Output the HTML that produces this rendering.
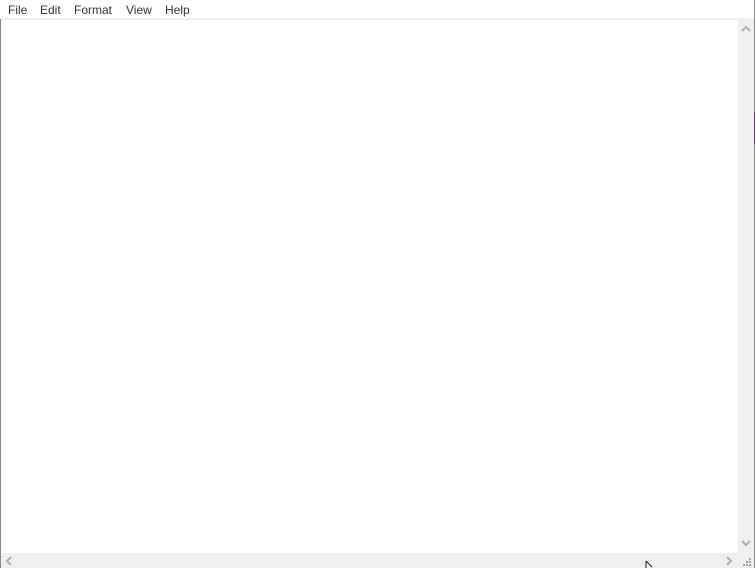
<!DOCTYPE html>
<html><head><style>
*{margin:0;padding:0;box-sizing:border-box}
body{width:755px;height:568px;background:#fff;position:relative;overflow:hidden;font-family:"Segoe UI","Liberation Sans",sans-serif}
#menu{position:absolute;left:0;top:0;width:754px;height:18px;background:#fff;font-size:12px;color:#333}
#menu span{position:absolute;top:3px}
#sep{position:absolute;left:0;top:18px;width:754px;height:2px;background:#f0f0f0}
#lb{position:absolute;left:0;top:19px;width:1px;height:549px;background:#888}
#vs{position:absolute;left:738px;top:20px;width:16px;height:533px;background:#efefef}
#hs{position:absolute;left:1px;top:553px;width:753px;height:15px;background:#efefef}
#rb{position:absolute;left:754px;top:0;width:1px;height:568px;background:#8a8a8a}
#pu{position:absolute;left:754px;top:112px;width:1px;height:32px;background:#7a2a9a}
svg{position:absolute}
</style></head><body>
<div id="menu"><span style="left:8px">File</span><span style="left:40px">Edit</span><span style="left:74px">Format</span><span style="left:126px">View</span><span style="left:165px">Help</span></div>
<div id="sep"></div>
<div id="lb"></div>
<div id="vs"></div>
<div id="hs"></div>
<div id="rb"></div><div id="pu"></div>
<svg style="left:741px;top:25px" width="10" height="8"><path d="M1 6 L5 2 L9 6" stroke="#b0b0b0" stroke-width="2" fill="none"/></svg>
<svg style="left:741px;top:539px" width="10" height="8"><path d="M1 2 L5 6 L9 2" stroke="#b0b0b0" stroke-width="2" fill="none"/></svg>
<svg style="left:5px;top:556px" width="8" height="10"><path d="M6 1 L2 5 L6 9" stroke="#b0b0b0" stroke-width="2" fill="none"/></svg>
<svg style="left:725px;top:556px" width="8" height="10"><path d="M2 1 L6 5 L2 9" stroke="#b0b0b0" stroke-width="2" fill="none"/></svg>
<svg style="left:743px;top:558px" width="10" height="10" fill="#a8a8a8"><rect x="6" y="0" width="2" height="2"/><rect x="3" y="3" width="2" height="2"/><rect x="6" y="3" width="2" height="2"/><rect x="0" y="6" width="2" height="2"/><rect x="3" y="6" width="2" height="2"/><rect x="6" y="6" width="2" height="2"/></svg>
<svg style="left:645px;top:561px" width="10" height="7"><path d="M1 0 L1 7 M1 0 L7 6" stroke="#222" stroke-width="1" fill="none"/></svg>
</body></html>
